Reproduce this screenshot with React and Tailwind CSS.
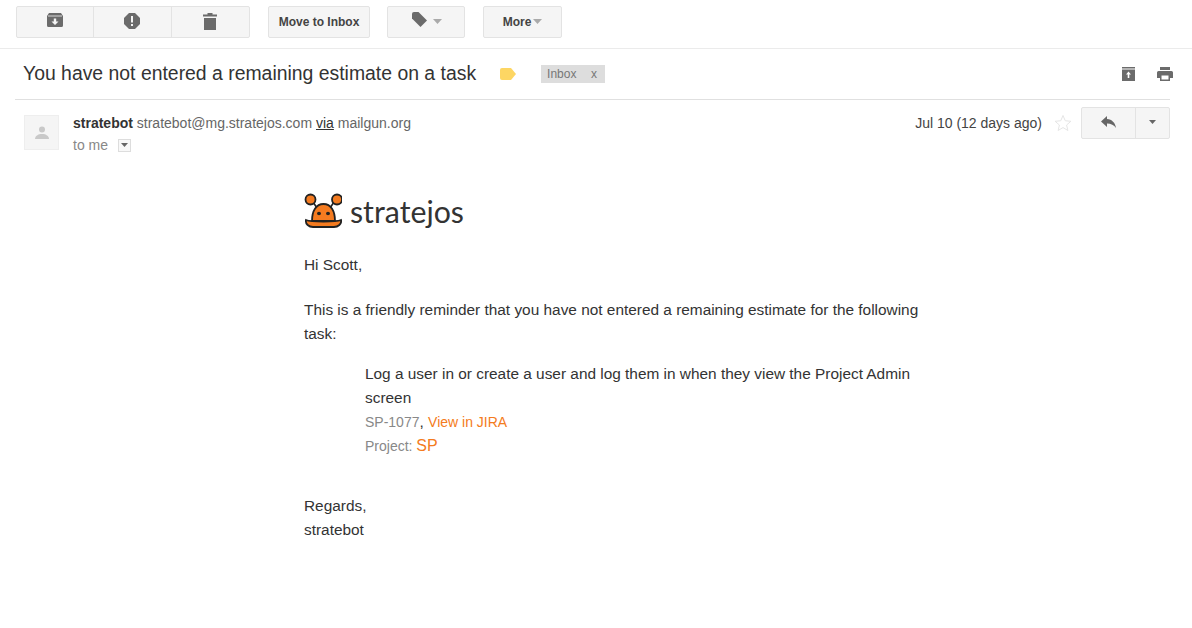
import React from "react";

const arial = "font-['Liberation_Sans',Arial,sans-serif]";
const btn = "h-8 flex items-center justify-center bg-[#f5f5f5] border border-[#e3e3e3] rounded-[2px] text-[#444]";

function Caret({ className = "" }) {
  return (
    <svg width="9" height="5" viewBox="0 0 9 5" className={className}>
      <path d="M0 0h9L4.500 5z" fill="currentColor" />
    </svg>
  );
}

function Toolbar() {
  return (
    <div className="h-[49px] border-b border-[#ebebeb] pl-4 pt-[6px] flex items-start">
      <div className="flex h-8 w-[234px] bg-[#f5f5f5] border border-[#e3e3e3] rounded-[2px]">
        <div className="w-[77px] flex items-center justify-center border-r border-[#e3e3e3]">
          <svg width="16" height="14" viewBox="0 0 16 14" className="-mt-[4px]">
            <path d="M2 0h12l2 3v9.500a1.500 1.500 0 0 1-1.500 1.500h-13A1.500 1.500 0 0 1 0 12.500V3z" fill="#6b6b6b" />
            <path d="M1 3h14" stroke="#f5f5f5" strokeWidth="0.800" />
            <path d="M6.800 5.500h2.400v3H11.500L8 12 4.500 8.500h2.300z" fill="#f5f5f5" />
          </svg>
        </div>
        <div className="w-[78px] flex items-center justify-center border-r border-[#e3e3e3]">
          <svg width="16" height="16" viewBox="0 0 16 16" className="-mt-[3px] -ml-[2px]">
            <path d="M5 0h6l5 5v6l-5 5H5l-5-5V5z" fill="#6b6b6b" />
            <path d="M7 3h2v6.500H7zM7 11h2v2H7z" fill="#f5f5f5" />
          </svg>
        </div>
        <div className="flex-1 flex items-center justify-center">
          <svg width="14" height="17" viewBox="0 0 14 17" className="-ml-[2px] -mt-[1px]">
            <path d="M0 1.500h4.500V0h5v1.500H14v2H0zM1 5h12v12H1z" fill="#6b6b6b" />
          </svg>
        </div>
      </div>
      <div className={`${btn} ml-[18px] w-[102px] text-[12px] font-bold ${arial}`}>Move to Inbox</div>
      <div className={`${btn} ml-[17px] w-[78px] gap-[5px] text-[#6b6b6b]`}>
        <svg width="17" height="17" viewBox="0 0 17 17" className="-mt-[5px]">
          <path d="M1 3a2 2 0 0 1 2-2h4.500L16 9.500 9.500 16 1 7.500z" fill="#6b6b6b" />
        </svg>
        <Caret className="text-[#aaa] -mt-[1px]" />
      </div>
      <div className={`${btn} ml-[18px] w-[79px] gap-[2px] text-[12px] font-bold ${arial}`}>
        More
        <Caret className="text-[#aaa] -mt-[2px]" />
      </div>
    </div>
  );
}

function SubjectRow() {
  return (
    <div className="ml-[15px] mr-[22px] h-[51px] border-b border-[#e0e0e0] flex items-center pl-2">
      <h1 className={`text-[19.4px] text-[#333] font-normal ${arial}`}>You have not entered a remaining estimate on a task</h1>
      <svg width="16" height="12" viewBox="0 0 16 12" className="ml-[24px] -mt-[1px]">
        <path d="M2 0h9l5 6-5 6H2a2 2 0 0 1-2-2V2a2 2 0 0 1 2-2z" fill="#fdd663" />
      </svg>
      <div className={`ml-[25px] h-[18px] w-[64px] bg-[#ddd] text-[#777] text-[12px] flex items-center justify-between pl-[6px] pr-2 ${arial}`}>
        <span>Inbox</span>
        <span>x</span>
      </div>
      <div className="ml-auto flex items-center gap-[22px] -mr-[3px]">
        <svg width="13" height="14" viewBox="0 0 13 14">
          <path d="M0 0h13v1.500H0zM0 2.500h13V14H0z" fill="#6b6b6b" />
          <path d="M6.500 4.500 9 7.500H7.300V11H5.700V7.500H4z" fill="#fff" />
        </svg>
        <svg width="16" height="14" viewBox="0 0 16 14">
          <path d="M3 0h10v3H3zM1.500 4h13A1.500 1.500 0 0 1 16 5.500V11h-3v3H3v-3H0V5.500A1.500 1.500 0 0 1 1.500 4z" fill="#6b6b6b" />
          <path d="M4.500 8.500h7v4h-7z" fill="#fff" />
        </svg>
      </div>
    </div>
  );
}

function SenderRow() {
  return (
    <div className="flex pl-6 pr-[22px] pt-[14px]">
      <div className="w-[35px] h-[35px] bg-[#f5f5f5] border border-[#eee] flex items-center justify-center mt-[1px]">
        <svg width="14" height="14" viewBox="0 0 14 14">
          <circle cx="7" cy="3.500" r="3" fill="#c9c9c9" />
          <path d="M0 13c0-3 3-5 7-5s7 2 7 5z" fill="#c9c9c9" />
        </svg>
      </div>
      <div className={`ml-[14px] text-[14px] ${arial}`}>
        <div className="text-[#666] leading-[18px]">
          <span className="font-bold text-[#333]">stratebot</span> stratebot@mg.stratejos.com <span className="underline text-[#333]">via</span> mailgun.org
        </div>
        <div className="flex items-center mt-[4px] text-[#888] leading-[18px]">
          to me
          <span className="ml-[10px] w-[13px] h-[13px] border border-[#ddd] bg-[#f8f8f8] flex items-center justify-center text-[#666]">
            <svg width="7" height="4" viewBox="0 0 7 4"><path d="M0 0h7L3.500 4z" fill="currentColor" /></svg>
          </span>
        </div>
      </div>
      <div className="ml-auto flex items-start">
        <span className={`text-[14px] text-[#444] leading-[18px] ${arial}`}>Jul 10 (12 days ago)</span>
        <svg width="18" height="18" viewBox="0 0 24 24" className="ml-[12px]" fill="none" stroke="#e4e4e4" strokeWidth="1.300">
          <path d="M12 2l3 7 7.500.7-5.700 5 1.700 7.300-6.500-3.900-6.500 3.900 1.700-7.300-5.700-5L9 9z" />
        </svg>
        <div className="ml-[9px] -mt-[7px] flex h-8 w-[89px] bg-[#f5f5f5] border border-[#e3e3e3] rounded-[2px]">
          <div className="w-[54px] flex items-center justify-center border-r border-[#e3e3e3]">
            <svg width="15" height="12" viewBox="0 0 15 12" className="-mt-[3px]">
              <path d="M6 0v3c5 .5 8 3.500 9 9-2-3-5-4.500-9-4.500V11L0 5.500z" fill="#666" />
            </svg>
          </div>
          <div className="flex-1 flex items-center justify-center text-[#666]">
            <svg width="7" height="4" viewBox="0 0 7 4" className="-mt-[3px]"><path d="M0 0h7L3.500 4z" fill="currentColor" /></svg>
          </div>
        </div>
      </div>
    </div>
  );
}

function Logo() {
  return (
    <div className="flex items-center h-[40px]">
      <svg width="38" height="36" viewBox="0 0 38 36">
        <path d="M9 9l4 6M30 9l-4 6" stroke="#222" strokeWidth="1.600" />
        <circle cx="6.500" cy="6.500" r="5" fill="#f47b20" stroke="#222" strokeWidth="1.800" />
        <circle cx="33" cy="6.500" r="5" fill="#f47b20" stroke="#222" strokeWidth="1.800" />
        <path d="M8 28c0-10 4-17 11.500-17S31 18 31 28z" fill="#f47b20" stroke="#222" strokeWidth="1.800" />
        <ellipse cx="15" cy="20.500" rx="2" ry="1.800" fill="#222" />
        <ellipse cx="24" cy="20.500" rx="2" ry="1.800" fill="#222" />
        <path d="M2 27c5 2 30 2 35 0 1 4-3 7-7 7H9c-4 0-8-3-7-7z" fill="#f47b20" stroke="#222" strokeWidth="1.800" />
      </svg>
      <span className="ml-[8px] text-[30.3px] text-[#333] font-['Lato',sans-serif] leading-none">stratejos</span>
    </div>
  );
}

export default function App() {
  return (
    <div className="w-[1192px] h-[628px] bg-white overflow-hidden">
      <Toolbar />
      <SubjectRow />
      <SenderRow />
      <div className={`ml-[304px] mt-[37px] w-[620px] text-[15.4px] leading-[24px] text-[#333] ${arial}`}>
        <Logo />
        <p className="mt-[22px]">Hi Scott,</p>
        <p className="mt-[21px]">This is a friendly reminder that you have not entered a remaining estimate for the following task:</p>
        <div className="ml-[61px] mt-[16px]">
          <div>Log a user in or create a user and log them in when they view the Project Admin screen</div>
          <div>
            <span className="text-[14px] text-[#888]">SP-1077</span>, <span className="text-[14px] text-[#f47b20]">View in JIRA</span>
          </div>
          <div>
            <span className="text-[14px] text-[#888]">Project: </span><span className="text-[16px] text-[#f47b20]">SP</span>
          </div>
        </div>
        <p className="mt-[36px]">Regards,</p>
        <p>stratebot</p>
      </div>
    </div>
  );
}
